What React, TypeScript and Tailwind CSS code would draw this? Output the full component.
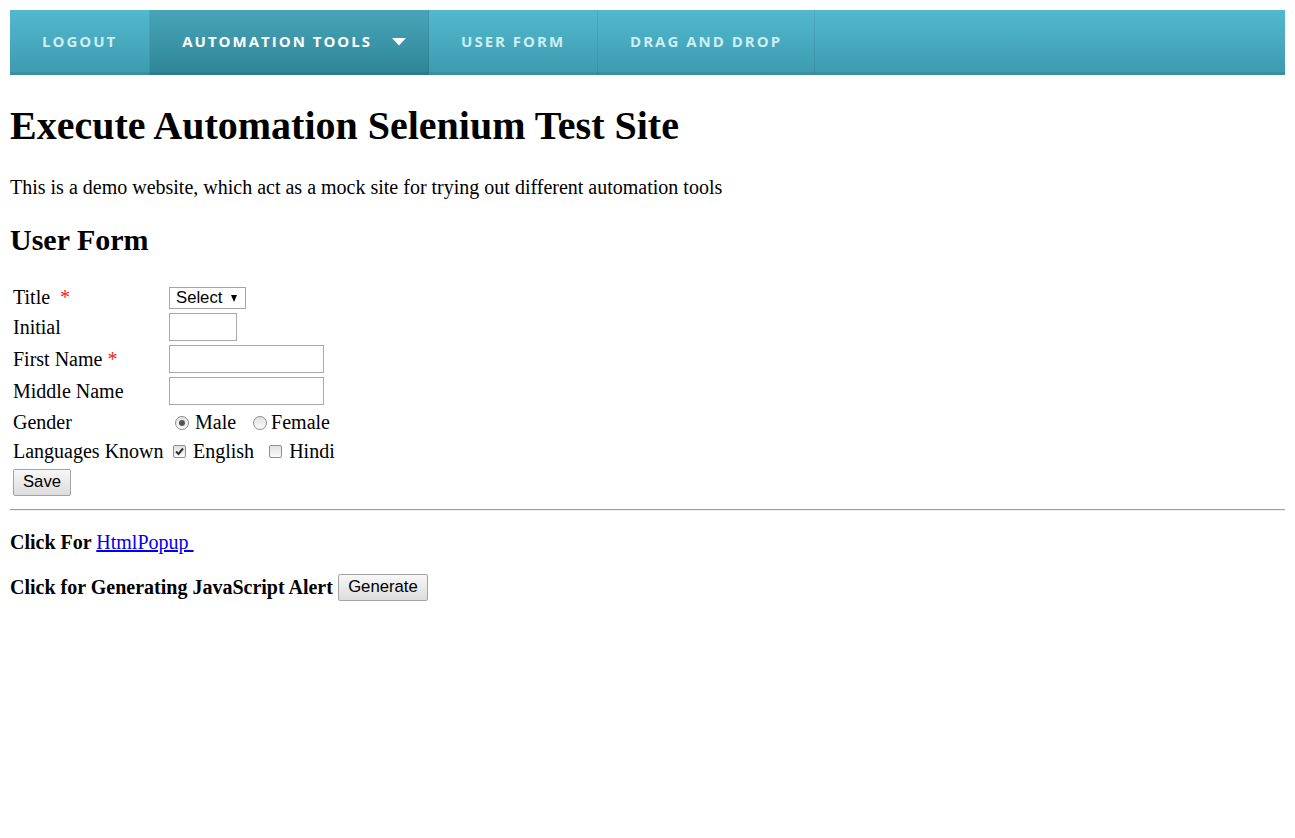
import React, { useState } from "react";

const navItems = [
  { label: "Logout", active: false, caret: false },
  { label: "Automation Tools", active: true, caret: true },
  { label: "User Form", active: false, caret: false },
  { label: "Drag and Drop", active: false, caret: false },
];

const Radio = ({ checked }: { checked?: boolean }) => (
  <span className="inline-flex items-center justify-center w-[14px] h-[14px] rounded-full border border-[#8e8e8e] bg-gradient-to-b from-[#e2e2e2] to-[#fafafa]">
    {checked && <span className="w-[6px] h-[6px] rounded-full bg-[#555]" />}
  </span>
);

const Checkbox = ({ checked }: { checked?: boolean }) => (
  <span className="inline-flex items-center justify-center w-[13px] h-[13px] rounded-[2px] border border-[#8e8e8e] bg-gradient-to-b from-[#e2e2e2] to-[#fafafa]">
    {checked && (
      <svg width="9" height="9" viewBox="0 0 9 9">
        <path d="M1 4.5 L3.5 7 L8 1.5" stroke="#333" strokeWidth="2" fill="none" />
      </svg>
    )}
  </span>
);

const Star = () => <span className="text-[#ee2222]">*</span>;

const OldButton = ({ title, className }: { title: string; className?: string }) => (
  <button
    className={
      "h-[27px] border border-[#a3a3a3] rounded-[2px] bg-gradient-to-b from-[#f7f7f7] to-[#dddddd] text-[16.7px] text-black font-['Liberation_Sans',Arial,sans-serif] leading-none " +
      (className ?? "")
    }
  >
    {title}
  </button>
);

export default function App() {
  const [title, setTitle] = useState("");

  return (
    <div className="p-[10px] font-['Liberation_Serif','Times_New_Roman',serif] text-[20px] leading-[23px] text-black bg-white min-h-[838px]">
      {/* nav */}
      <nav className="flex h-[65px] bg-gradient-to-b from-[#52b9cf] to-[#3d9aae] shadow-[inset_0_-3px_0_rgba(0,0,0,0.07)]">
        {navItems.map((item) => (
          <div
            key={item.label}
            className={
              "flex items-center h-full pl-[32px] pb-[2px] border-r border-[rgba(0,0,0,0.07)] font-['Open_Sans',sans-serif] font-bold uppercase text-[15px] tracking-[2px] " +
              (item.active
                ? "pr-[22px] bg-gradient-to-b from-[#47a5b8] to-[#2f8597] text-white shadow-[inset_0_-3px_0_rgba(0,0,0,0.07)]"
                : "pr-[32px] text-[#cdeef2]")
            }
          >
            {item.label}
            {item.caret && (
              <svg className="ml-[20px]" width="14" height="8" viewBox="0 0 14 8">
                <path d="M0 0 H14 L7 7.5 Z" fill="#fff" />
              </svg>
            )}
          </div>
        ))}
      </nav>

      <h1 className="mt-[28px] mb-[27px] text-[40px] font-bold leading-[46px]">
        Execute Automation Selenium Test Site
      </h1>
      <p>
        This is a demo website, which act as a mock site for trying out different automation tools
      </p>
      <h2 className="mt-[24px] mb-[26px] text-[30px] font-bold leading-[34px]">User Form</h2>

      <table className="border-separate border-spacing-[2px]">
        <tbody>
          <tr>
            <td className="p-px w-[154px] whitespace-nowrap">
              Title&nbsp;&nbsp;<Star />
            </td>
            <td className="p-px">
              <div className="relative flex w-[77px]">
                <select
                  value={title}
                  onChange={(e) => setTitle(e.target.value)}
                  className="appearance-none h-[22px] w-[77px] border border-[#a6a6a6] bg-white pl-[6px] text-[16.7px] leading-[20px] font-['Liberation_Sans',Arial,sans-serif]"
                >
                  <option value="">Select</option>
                  <option value="Mr.">Mr.</option>
                  <option value="Ms.">Ms.</option>
                </select>
                <span className="pointer-events-none absolute right-[9px] top-[8px] w-0 h-0 border-l-[3.5px] border-r-[3.5px] border-t-[7px] border-l-transparent border-r-transparent border-t-black" />
              </div>
            </td>
          </tr>
          <tr>
            <td className="p-px">Initial</td>
            <td className="p-px">
              <input className="block h-[28px] w-[68px] border border-[#a9a9a9] bg-white" />
            </td>
          </tr>
          <tr>
            <td className="p-px whitespace-nowrap">
              First Name <Star />
            </td>
            <td className="p-px">
              <input className="block h-[28px] w-[155px] border border-[#a9a9a9] bg-white" />
            </td>
          </tr>
          <tr>
            <td className="p-px whitespace-nowrap">Middle Name</td>
            <td className="p-px">
              <input className="block h-[28px] w-[155px] border border-[#a9a9a9] bg-white" />
            </td>
          </tr>
          <tr>
            <td className="p-px h-[29px]">Gender</td>
            <td className="p-px">
              <span className="flex items-center pl-[6px]">
                <Radio checked />
                <span className="ml-[6px] mr-[17px]">Male</span>
                <Radio />
                <span className="ml-[4px]">Female</span>
              </span>
            </td>
          </tr>
          <tr>
            <td className="p-px h-[24px] whitespace-nowrap">Languages Known</td>
            <td className="p-px">
              <span className="flex items-center pl-[4px]">
                <Checkbox checked />
                <span className="ml-[7px] mr-[15px]">English</span>
                <Checkbox />
                <span className="ml-[7px]">Hindi</span>
              </span>
            </td>
          </tr>
          <tr>
            <td className="p-px" colSpan={2}>
              <OldButton title="Save" className="w-[58px] block mt-[2px]" />
            </td>
          </tr>
        </tbody>
      </table>

      <hr className="my-[10px] border-t border-[#9e9e9e] border-b border-b-[#eeeeee]" />

      <p className="mt-[20px]">
        <b>Click For </b>
        <a href="#" className="text-[#0000ee] underline">
          HtmlPopup&nbsp;
        </a>
      </p>
      <p className="mt-[20px] flex items-center">
        <b>Click for Generating JavaScript Alert</b>
        <OldButton title="Generate" className="ml-[5px] w-[90px]" />
      </p>
    </div>
  );
}
